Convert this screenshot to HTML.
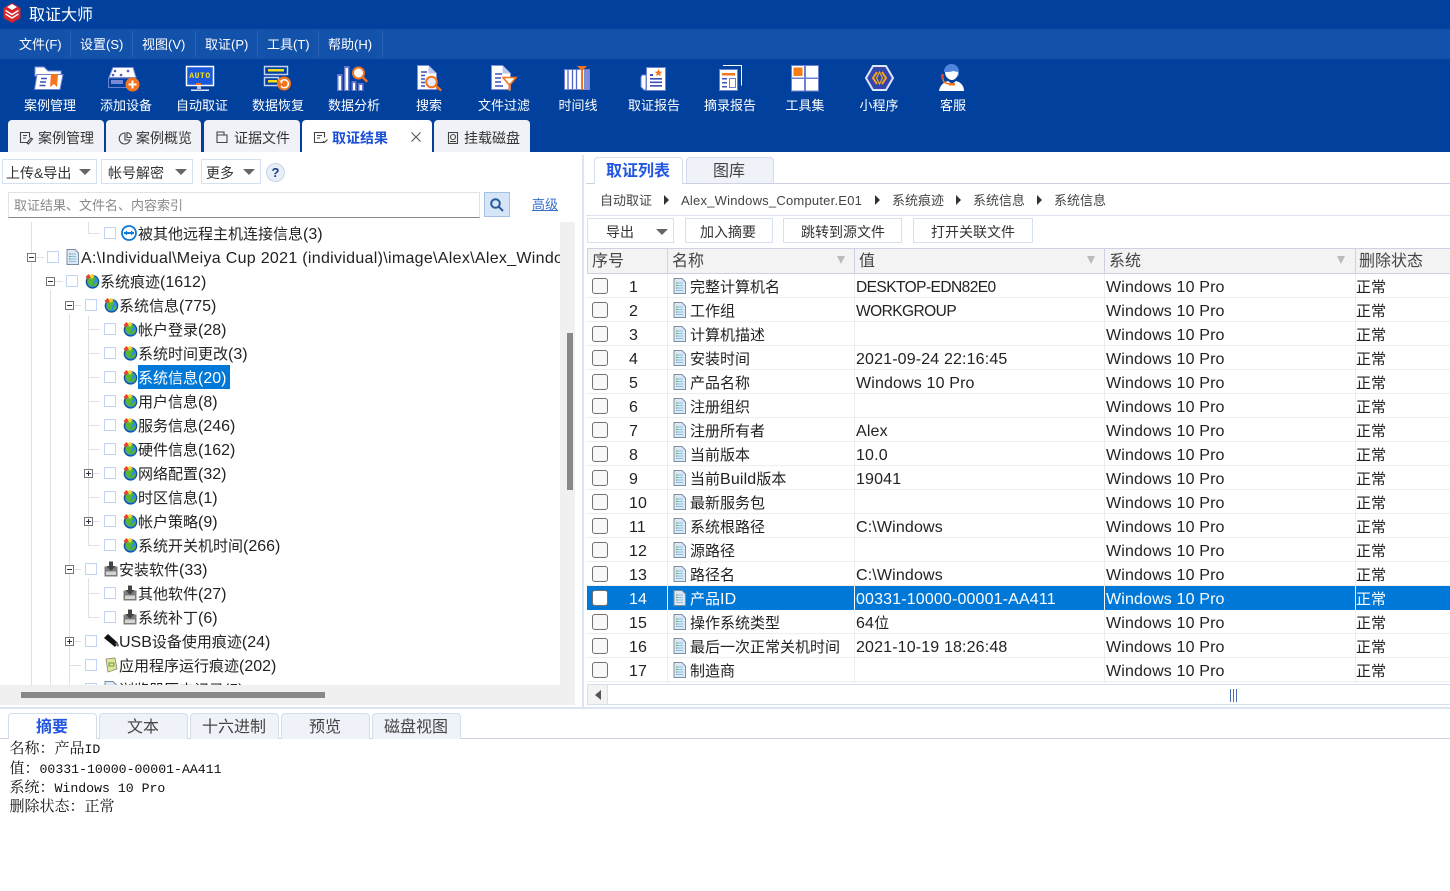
<!DOCTYPE html>
<html lang="zh"><head><meta charset="utf-8"><title>取证大师</title>
<style>
html,body{margin:0;padding:0;width:1450px;height:891px;overflow:hidden;background:#fff}
body{position:relative;font-family:"Liberation Sans","Noto Sans CJK SC",sans-serif;color:#222}
div,svg{position:absolute;box-sizing:border-box}
.t{white-space:nowrap;line-height:24px;font-size:15px;margin-top:1px}
i{font-style:normal;font-size:16px;letter-spacing:.15px}
#tree .t{margin-top:2px}
#tree i{letter-spacing:0}
#tree i.pth{letter-spacing:.3px}
.m{color:#fff;font-size:13px;top:32px}
.ms{width:1px;background:#2b64b5;top:31px;height:26px}
.l{color:#fff;font-size:13px;top:93px;text-align:center;width:80px}
.tab{top:120px;height:32px;background:#f0f2f7;border-radius:4px 4px 0 0}
.tt{top:125px;font-size:14px;color:#333}
.btn{border:1px solid #d5e0f2;background:#fff;top:218px;height:25px}
.bt{font-size:14px;color:#333;top:219px}
.cb{width:12px;height:12px;border:1.3px solid #c3d3f5;background:#fff}
.e{width:9px;height:9px;border:1px solid #777;background:#fff}
.e:before{content:"";position:absolute;left:1px;top:3px;width:5px;height:1px;background:#334}
.e.p:after{content:"";position:absolute;left:3px;top:1px;width:1px;height:5px;background:#334}
.v{width:1px;background:#e0e0e0}
.h{height:1px;background:#e0e0e0}
.i{width:16px;height:16px}
.r{left:587px;width:863px;height:24px;border-bottom:1px solid #eee}
.c{width:16px;height:16px;left:592px;border:1.5px solid #707070;border-radius:3px;background:#f8f8f8;margin-top:1px}
.d{width:13px;height:16px;left:673px}
.n,.a,.b,.s,.x{margin-top:2px}
.n{left:629px}.a{left:690px}.b{left:856px}.s{left:1106px}.x{left:1356px}
i.up{font-size:15.5px;letter-spacing:-.55px}
.hd{top:249px;font-size:16px;color:#444}
.f{left:0;top:0;width:0;height:0;border-left:4.5px solid transparent;border-right:4.5px solid transparent;border-top:8px solid #bbb}
.ar{width:0;height:0;border-left:6px solid transparent;border-right:6px solid transparent;border-top:6px solid #666;top:169px}
.bc{font-size:13px;color:#444;top:188px}
.tri{width:0;height:0;border-top:5px solid transparent;border-bottom:5px solid transparent;border-left:5px solid #333;top:195px}
.bot{top:713px;height:26px;background:#eff2f8;border:1px solid #d2ddf0;border-bottom:none;border-radius:4px 4px 0 0}
.bl{top:715px;font-size:16px;color:#444}
.mono{left:9.5px;margin-top:1px;font-family:"Liberation Mono","Noto Serif CJK SC",monospace;font-size:13.2px;line-height:19px;white-space:pre;color:#111}
.mono span{font-size:15px}
</style></head>
<body>
<svg width="0" height="0" style="left:0;top:0">
<defs>
<symbol id="g" viewBox="0 0 16 16"><circle cx="8.500" cy="8.800" r="6.800" fill="#0f4f8e"/><circle cx="8.500" cy="8.800" r="5.600" fill="#2f8fe0"/><path d="M5 5c3-2 6-1 6 1s-2 2-2 4 0 3-2 3-3-3-3-5 0-2 1-3zM11.500 9.500c2-1 2.500 0 1.500 2s-3 2-3 1 .5-2.200 1.500-3z" fill="#57b82f"/><path d="M1.500 4l3-3 2.500 2.500-3 3z" fill="#e5432b"/><path d="M5.500 2.500l3-1.500 2 2.500-3 2.500z" fill="#f6d02c"/></symbol>
<symbol id="p" viewBox="0 0 16 16"><path d="M1.500 5.500h13v10h-13z" fill="#7d7d7d"/><path d="M3 10.500h10v3.500H3z" fill="#d4d4d4"/><path d="M6 0.500h4v4.500h2.500L8 10 3.500 5H6z" fill="#444"/></symbol>
<symbol id="dc" viewBox="0 0 13 16"><path d="M1 .5h8l3.500 3.500v11.500H1z" fill="#dce9f5" stroke="#7d8da0"/><path d="M3 5h7M3 7.500h7M3 10h7M3 12.500h7" stroke="#8dbde0" stroke-width="1"/><path d="M3 5h1.500M3 7.500h1.500M3 10h1.500" stroke="#4a9a50" stroke-width="1"/></symbol>
</defs>
</svg>

<!-- top bars -->
<div style="left:0;top:0;width:1450px;height:152px;background:#01419d"></div>
<div style="left:0;top:29px;width:1450px;height:30px;background:#1352ab"></div>
<svg style="left:2px;top:2px" width="20" height="22" viewBox="0 0 20 22"><path d="M10 1l8.500 5v10L10 21l-8.500-5V6z" fill="#d8232a"/><path d="M10 2l5 3-5 3-5-3z" fill="#fff"/><path d="M3.500 8.500L10 12.500l6.500-4M3.500 12L10 16l6.500-4" stroke="#fff" stroke-width="1.500" fill="none"/></svg>
<div class="t" style="left:29px;top:3px;color:#fff;font-size:16px">取证大师</div>

<div class="t m" style="left:19px">文件(F)</div><div class="ms" style="left:70px"></div>
<div class="t m" style="left:80px">设置(S)</div><div class="ms" style="left:132px"></div>
<div class="t m" style="left:142px">视图(V)</div><div class="ms" style="left:195px"></div>
<div class="t m" style="left:205px">取证(P)</div><div class="ms" style="left:257px"></div>
<div class="t m" style="left:267px">工具(T)</div><div class="ms" style="left:318px"></div>
<div class="t m" style="left:328px">帮助(H)</div><div class="ms" style="left:382px"></div>

<!-- toolbar icons -->
<svg style="left:0;top:0" width="1000" height="100" viewBox="0 0 1000 100">
<!-- folder -->
<path d="M35 67h9l4 4h13v5H35z" fill="#fff" stroke="#7d8fd8"/><path d="M37 74.500h26L60 89.500H34.500z" fill="#fff" stroke="#6d80d0"/><path d="M41 78.500h6M40 82h6M39.500 85.500h6" stroke="#3c50b8" stroke-width="1.500"/><path d="M51 74h7l-1 13-3-3-4 3z" fill="#f5741f"/>
<!-- add device -->
<path d="M113 67.500h20l3 10h-27z" fill="#fff" stroke="#8090d8"/><circle cx="115" cy="71" r="1.300" fill="#4a5cbf"/><circle cx="128" cy="71" r="1.300" fill="#4a5cbf"/><circle cx="113" cy="75" r="1.300" fill="#4a5cbf"/><circle cx="121" cy="75" r="1.300" fill="#4a5cbf"/><path d="M108.500 78h27v9.500h-27z" fill="#01419d" stroke="#6d80d0"/><path d="M111 80h12v4h-12z" fill="#7688d8"/><circle cx="132.500" cy="84.500" r="7" fill="#f5741f"/><path d="M132.500 80.500v8M128.500 84.500h8" stroke="#fff" stroke-width="2"/>
<!-- auto -->
<path d="M186.500 66.500h27v19h-27z" fill="#1958dc" stroke="#fff" stroke-width="1.500"/><text x="200" y="78" font-family="Liberation Mono" font-size="8" font-weight="bold" letter-spacing=".6" fill="#f7e017" text-anchor="middle">AUTO</text><path d="M196 83h5v2h-5z" fill="#f5741f"/><path d="M197 86h4v3h-4z" fill="#b8c4ee"/><path d="M191 89.500h18v1.500h-18z" fill="#dfe5fa"/>
<!-- recover -->
<path d="M264.500 66.500h23v8h-23z" fill="#01419d" stroke="#c8d2f5" stroke-width="1.400"/><path d="M268 69h16v2.500h-16z" fill="#f7e017"/><path d="M264.500 77.500h14v8h-14z" fill="#01419d" stroke="#c8d2f5" stroke-width="1.400"/><path d="M268 80h9v2.500h-9z" fill="#f7e017"/><circle cx="284" cy="83.500" r="7" fill="#f5741f"/><path d="M281 81.500a4 4 0 1 1 0 4.500" stroke="#fff" stroke-width="1.500" fill="none"/><path d="M279 80.500l3.500.5-.5 3z" fill="#fff"/>
<!-- analysis -->
<path d="M337 74h5.500v17H337zM344 66h5.500v25H344zM351.500 81h5v10h-5zM358 83h5.500v8H358z" fill="#6778cc"/><path d="M338.500 76h2.500v14h-2.500zM345.500 68h2.500v22h-2.500zM353 83h2v7h-2zM359.500 85h2.500v5h-2.500z" fill="#fff"/><path d="M362.500 77l4 4" stroke="#f5741f" stroke-width="2.400" stroke-linecap="round"/><circle cx="358.500" cy="73" r="5.500" fill="#fff" stroke="#f5741f" stroke-width="2"/>
<!-- search -->
<path d="M417.500 65.500h11l8 8v16h-19z" fill="#fff" stroke="#7d8fd8"/><path d="M428.500 65.500v8h8" fill="#bcc7ee"/><path d="M421 72h6M421 75.500h4M421 79h4M421 82.500h4M421 86h4" stroke="#3c50b8" stroke-width="1.500"/><path d="M436 86l4.500 4" stroke="#f5741f" stroke-width="2.400" stroke-linecap="round"/><circle cx="431.500" cy="82" r="5.300" fill="#e8ecfb" stroke="#f5741f" stroke-width="2"/>
<!-- filter -->
<path d="M491.500 65.500h11l8 8v16h-19z" fill="#fff" stroke="#7d8fd8"/><path d="M502.500 65.500v8h8" fill="#bcc7ee"/><path d="M495 74h7M495 78h6M495 82h6M495 86h8" stroke="#3c50b8" stroke-width="1.500"/><path d="M503 77.500h13l-5.500 6.500h-2z" fill="#fff" stroke="#f5741f" stroke-width="1.600"/><path d="M508.500 84h2v7h-2z" fill="#f5741f"/>
<!-- timeline -->
<path d="M564.500 69.500h25v20h-25z" fill="#fff" stroke="#6d80d0"/><path d="M568 69v20M572.500 69v20M576.500 69v20M586 69v20" stroke="#5367c4" stroke-width="1.300"/><path d="M584 70h5.500v20H584z" fill="#7c8cd6"/><path d="M577 66h10l-5 5z" fill="#f5741f"/><path d="M581 70h2v20h-2z" fill="#f5741f"/>
<!-- report -->
<path d="M642 75h4v15h-2l-3-3V77z" fill="#fff" stroke="#6d80d0"/><path d="M646.500 67.500h19v23h-19z" fill="#fff" stroke="#6d80d0"/><path d="M650 74h3v2h-3zM650 78h12v1.600h-12zM650 81.500h12v1.600h-12zM650 85h12v1.600h-12z" fill="#3c50b8"/><path d="M658.500 69l1 2.500 2.700.2-2 1.800.6 2.600-2.300-1.400-2.300 1.400.6-2.600-2-1.800 2.700-.2z" fill="#f5741f"/>
<!-- digest -->
<path d="M723 65.500h18.500v20" fill="none" stroke="#fff"/><path d="M719.500 69.500h18v21h-18z" fill="#fff" stroke="#6d80d0"/><path d="M722 73h13v2.500h-13z" fill="#f5741f"/><path d="M722 78h5v1.500h-5zM722 82h5v1.500h-5zM722 86h5v1.500h-5z" fill="#3c50b8"/><path d="M729.500 78.500h6v9h-6z" fill="#fff" stroke="#6d80d0"/>
<!-- tools -->
<path d="M792.500 66.500h11v10.500h-11z" fill="#f57d12" stroke="#fff" stroke-width="2"/><path d="M806 66h12v11.500h-12zM792 79h12v11.500h-12zM806 79h12v11.500h-12z" fill="#fff"/><path d="M791.500 65.500h13v12.500h-13zM805.500 65.500h13v12.500h-13zM791.500 78.500h13v12.500h-13zM805.500 78.500h13v12.500h-13z" fill="none" stroke="#6d80d0"/>
<!-- mini -->
<path d="M873 66h13l7 12-7 12h-13l-7-12z" fill="#3346ab" stroke="#dfe6fb" stroke-width="2"/><path d="M877 72l-4 6 4 6M882 72l4 6-4 6" fill="none" stroke="#f3a51e" stroke-width="2"/><path d="M879.500 72l-3 6 3 6 3-6z" fill="none" stroke="#f3a51e" stroke-width="1.200"/>
<!-- service -->
<path d="M944 72a7.500 7.500 0 0 1 15-1c0 2 0 4-1 6l-6-5z" fill="#4f86dd"/><path d="M945 72c3 0 6 0 8-1l5 1c0 5-3 8-6 8s-7-3-7-8z" fill="#fff"/><path d="M939 91c1-6 5-9 9-10l4 3 4-3c4 1 8 4 8 10z" fill="#fff"/><path d="M943 75v4c0 3 3 5 7 5" fill="none" stroke="#f5741f" stroke-width="1.500"/><path d="M941 74h3v5h-3z" fill="#e23b20"/><path d="M949 83h6v2.500h-6z" fill="#f5741f"/>
</svg>

<div class="t l" style="left:10px">案例管理</div>
<div class="t l" style="left:86px">添加设备</div>
<div class="t l" style="left:162px">自动取证</div>
<div class="t l" style="left:238px">数据恢复</div>
<div class="t l" style="left:314px">数据分析</div>
<div class="t l" style="left:389px">搜索</div>
<div class="t l" style="left:464px">文件过滤</div>
<div class="t l" style="left:538px">时间线</div>
<div class="t l" style="left:614px">取证报告</div>
<div class="t l" style="left:690px">摘录报告</div>
<div class="t l" style="left:765px">工具集</div>
<div class="t l" style="left:839px">小程序</div>
<div class="t l" style="left:913px">客服</div>

<!-- tabs -->
<div class="tab" style="left:8px;width:96px"></div>
<div class="tab" style="left:106px;width:95px"></div>
<div class="tab" style="left:204px;width:96px"></div>
<div class="tab" style="left:302px;width:130px;background:#fff"></div>
<div class="tab" style="left:434px;width:96px"></div>
<svg style="left:0;top:120px" width="470" height="32" viewBox="0 120 470 32">
<g fill="none" stroke="#444" stroke-width="1.100">
<path d="M28 142.500h-7.500v-10h9v5M23 135.500h4M23 138h3M27 143l4-5 1.500 1-4 5z"/>
<path d="M125 133a5.500 5.500 0 1 0 5 7h-5z"/><path d="M127 132.500a5 5 0 0 1 4.500 5h-4.500z"/>
<path d="M217 135v-3h7v3M217 135h10v7.500h-10z"/>
<path d="M324 142.500h-9.500v-10h10v5M317 135.500h5M317 138h3M323 141l1.500 1.500 3-3"/>
<path d="M411.500 132.500l9 9M420.500 132.500l-9 9" stroke="#555"/>
<path d="M448.500 132.500h9v11h-9z"/><circle cx="453" cy="137" r="2.500"/><path d="M450 141.500h6"/>
</g></svg>
<div class="t tt" style="left:38px">案例管理</div>
<div class="t tt" style="left:136px">案例概览</div>
<div class="t tt" style="left:234px">证据文件</div>
<div class="t tt" style="left:332px;color:#1a4fd8;font-weight:bold">取证结果</div>
<div class="t tt" style="left:464px">挂载磁盘</div>

<!-- left toolbar -->
<div style="left:2px;top:159px;width:95px;height:25px;border:1px solid #d5e0f2"></div><div class="t" style="left:6px;top:160px;font-size:14px;color:#333">上传&amp;导出</div><div class="ar" style="left:79px"></div>
<div style="left:101px;top:159px;width:92px;height:25px;border:1px solid #d5e0f2"></div><div class="t" style="left:108px;top:160px;font-size:14px;color:#333">帐号解密</div><div class="ar" style="left:175px"></div>
<div style="left:201px;top:159px;width:60px;height:25px;border:1px solid #d5e0f2"></div><div class="t" style="left:206px;top:160px;font-size:14px;color:#333">更多</div><div class="ar" style="left:243px"></div>
<div style="left:266px;top:163px;width:19px;height:19px;border-radius:50%;background:#e8eef8;border:1px solid #c8d4e8;color:#1a3a80;font-size:13px;font-weight:bold;text-align:center;line-height:17px">?</div>
<div style="left:8px;top:192px;width:472px;height:26px;border:1px solid #e2e2e2;border-bottom:1px solid #888"></div>
<div class="t" style="left:14px;top:193px;font-size:13px;color:#888">取证结果、文件名、内容索引</div>
<div style="left:484px;top:192px;width:26px;height:25px;background:#d6e5f8;border:1px solid #a5c0e4"></div>
<svg style="left:489px;top:197px" width="16" height="16" viewBox="0 0 16 16"><circle cx="6.500" cy="6.500" r="4.300" fill="none" stroke="#2c5c9c" stroke-width="2"/><path d="M10 10l4 4" stroke="#2c5c9c" stroke-width="2"/></svg>
<div class="t" style="left:532px;top:192px;font-size:13px;color:#3a70cc;text-decoration:underline">高级</div>

<!-- tree -->
<div id="tree" style="left:0;top:222px;width:560px;height:463px;overflow:hidden">
<div style="left:0;top:-222px;width:700px;height:900px">
<div class="v" style="left:31px;top:222px;height:470px"></div>
<div class="v" style="left:50px;top:290px;height:400px"></div>
<div class="v" style="left:69px;top:314px;height:376px"></div>
<div class="v" style="left:88px;top:222px;height:11px"></div>
<div class="v" style="left:88px;top:316px;height:229px"></div>
<div class="v" style="left:88px;top:578px;height:39px"></div>
<div class="h" style="left:88px;top:233px;width:12px"></div>
<div class="h" style="left:36px;top:257px;width:8px"></div>
<div class="h" style="left:55px;top:281px;width:8px"></div>
<div class="h" style="left:74px;top:305px;width:7px"></div>
<div class="h" style="left:88px;top:353px;width:12px"></div>
<div class="h" style="left:88px;top:329px;width:12px"></div>
<div class="h" style="left:88px;top:377px;width:12px"></div>
<div class="h" style="left:88px;top:401px;width:12px"></div>
<div class="h" style="left:88px;top:425px;width:12px"></div>
<div class="h" style="left:88px;top:449px;width:12px"></div>
<div class="h" style="left:93px;top:473px;width:7px"></div>
<div class="h" style="left:88px;top:497px;width:12px"></div>
<div class="h" style="left:93px;top:521px;width:7px"></div>
<div class="h" style="left:88px;top:545px;width:12px"></div>
<div class="h" style="left:74px;top:569px;width:7px"></div>
<div class="h" style="left:88px;top:593px;width:12px"></div>
<div class="h" style="left:88px;top:617px;width:12px"></div>
<div class="h" style="left:74px;top:641px;width:7px"></div>
<div class="h" style="left:69px;top:665px;width:12px"></div>

<div class="cb" style="left:104px;top:227px"></div>
<svg class="i" style="left:121px;top:225px" viewBox="0 0 16 16"><circle cx="8" cy="8" r="7" fill="#fff" stroke="#0e7ad6" stroke-width="1.800"/><path d="M3 8h10" stroke="#0e7ad6" stroke-width="2"/><path d="M3 8l3-2.500v5zM13 8l-3-2.500v5z" fill="#0e7ad6"/></svg>
<div class="t" style="left:138px;top:221px">被其他远程主机连接信息<i>(3)</i></div>

<div class="e" style="left:27px;top:253px"></div><div class="cb" style="left:47px;top:251px"></div>
<svg class="d" style="left:66px;top:249px" viewBox="0 0 13 16"><use href="#dc"/></svg>
<div class="t" style="left:81px;top:245px"><i class="pth">A:\Individual\Meiya Cup 2021 (individual)\image\Alex\Alex_Windows_Computer.E01</i></div>

<div class="e" style="left:46px;top:277px"></div><div class="cb" style="left:66px;top:275px"></div>
<svg class="i" style="left:84px;top:273px"><use href="#g"/></svg>
<div class="t" style="left:100px;top:269px">系统痕迹<i>(1612)</i></div>

<div class="e" style="left:65px;top:301px"></div><div class="cb" style="left:85px;top:299px"></div>
<svg class="i" style="left:103px;top:297px"><use href="#g"/></svg>
<div class="t" style="left:119px;top:293px">系统信息<i>(775)</i></div>

<div class="cb" style="left:104px;top:323px"></div><svg class="i" style="left:122px;top:321px"><use href="#g"/></svg>
<div class="t" style="left:138px;top:317px">帐户登录<i>(28)</i></div>
<div class="cb" style="left:104px;top:347px"></div><svg class="i" style="left:122px;top:345px"><use href="#g"/></svg>
<div class="t" style="left:138px;top:341px">系统时间更改<i>(3)</i></div>
<div class="cb" style="left:104px;top:371px"></div><svg class="i" style="left:122px;top:369px"><use href="#g"/></svg>
<div style="left:138px;top:365px;width:92px;height:24px;background:#0078d7"></div>
<div class="t" style="left:138px;top:365px;color:#fff">系统信息<i>(20)</i></div>
<div class="cb" style="left:104px;top:395px"></div><svg class="i" style="left:122px;top:393px"><use href="#g"/></svg>
<div class="t" style="left:138px;top:389px">用户信息<i>(8)</i></div>
<div class="cb" style="left:104px;top:419px"></div><svg class="i" style="left:122px;top:417px"><use href="#g"/></svg>
<div class="t" style="left:138px;top:413px">服务信息<i>(246)</i></div>
<div class="cb" style="left:104px;top:443px"></div><svg class="i" style="left:122px;top:441px"><use href="#g"/></svg>
<div class="t" style="left:138px;top:437px">硬件信息<i>(162)</i></div>
<div class="e p" style="left:84px;top:469px"></div><div class="cb" style="left:104px;top:467px"></div><svg class="i" style="left:122px;top:465px"><use href="#g"/></svg>
<div class="t" style="left:138px;top:461px">网络配置<i>(32)</i></div>
<div class="cb" style="left:104px;top:491px"></div><svg class="i" style="left:122px;top:489px"><use href="#g"/></svg>
<div class="t" style="left:138px;top:485px">时区信息<i>(1)</i></div>
<div class="e p" style="left:84px;top:517px"></div><div class="cb" style="left:104px;top:515px"></div><svg class="i" style="left:122px;top:513px"><use href="#g"/></svg>
<div class="t" style="left:138px;top:509px">帐户策略<i>(9)</i></div>
<div class="cb" style="left:104px;top:539px"></div><svg class="i" style="left:122px;top:537px"><use href="#g"/></svg>
<div class="t" style="left:138px;top:533px">系统开关机时间<i>(266)</i></div>

<div class="e" style="left:65px;top:565px"></div><div class="cb" style="left:85px;top:563px"></div><svg class="i" style="left:103px;top:561px"><use href="#p"/></svg>
<div class="t" style="left:119px;top:557px">安装软件<i>(33)</i></div>
<div class="cb" style="left:104px;top:587px"></div><svg class="i" style="left:122px;top:585px"><use href="#p"/></svg>
<div class="t" style="left:138px;top:581px">其他软件<i>(27)</i></div>
<div class="cb" style="left:104px;top:611px"></div><svg class="i" style="left:122px;top:609px"><use href="#p"/></svg>
<div class="t" style="left:138px;top:605px">系统补丁<i>(6)</i></div>

<div class="e p" style="left:65px;top:637px"></div><div class="cb" style="left:85px;top:635px"></div>
<svg class="i" style="left:103px;top:633px" viewBox="0 0 16 16"><path d="M1 5l4-4 10 9-3 4z" fill="#111"/><path d="M12 11l2-2 2 3-1 2z" fill="#666"/></svg>
<div class="t" style="left:119px;top:629px"><i>USB</i>设备使用痕迹<i>(24)</i></div>

<div class="cb" style="left:85px;top:659px"></div>
<svg class="i" style="left:103px;top:657px" viewBox="0 0 16 16"><path d="M3 2l9-1 2 11-9 3z" fill="#e3e59a" stroke="#887" stroke-width=".8"/><path d="M6 6h5v3H6z" fill="none" stroke="#6a9a40"/></svg>
<div class="t" style="left:119px;top:653px">应用程序运行痕迹<i>(202)</i></div>

<div class="cb" style="left:85px;top:683px"></div>
<svg class="d" style="left:104px;top:681px" viewBox="0 0 13 16"><use href="#dc"/></svg>
<div class="t" style="left:119px;top:677px">浏览器历史记录<i>(5)</i></div>
</div></div>

<!-- left scrollbars -->
<div style="left:560px;top:222px;width:15px;height:463px;background:#f0f0f0"></div>
<div style="left:567px;top:333px;width:6px;height:157px;background:#888"></div>
<div style="left:0;top:685px;width:575px;height:20px;background:#f0f0f0"></div>
<div style="left:21px;top:692px;width:304px;height:6px;background:#888"></div>
<div style="left:582px;top:155px;width:2px;height:552px;background:#dce5f4"></div>

<!-- right tabs -->
<div style="left:594px;top:157px;width:89px;height:27px;background:#fff;border:1px solid #d2ddf0;border-bottom:none;border-radius:4px 4px 0 0;z-index:2"></div>
<div class="t" style="left:606px;top:159px;font-size:16px;font-weight:bold;color:#2255e0;z-index:3">取证列表</div>
<div style="left:686px;top:157px;width:88px;height:26px;background:#eff2f8;border:1px solid #d2ddf0;border-bottom:none;border-radius:4px 4px 0 0"></div>
<div class="t" style="left:713px;top:159px;font-size:16px;color:#444">图库</div>
<div style="left:586px;top:183px;width:864px;height:1px;background:#cdd1e3"></div>

<!-- breadcrumb -->
<div class="t bc" style="left:600px">自动取证</div><div class="tri" style="left:664px"></div>
<div class="t bc" style="left:681px;letter-spacing:.22px">Alex_Windows_Computer.E01</div><div class="tri" style="left:875px"></div>
<div class="t bc" style="left:892px">系统痕迹</div><div class="tri" style="left:956px"></div>
<div class="t bc" style="left:973px">系统信息</div><div class="tri" style="left:1037px"></div>
<div class="t bc" style="left:1054px">系统信息</div>
<div style="left:586px;top:215px;width:864px;height:1px;background:#dde3f0"></div>

<!-- buttons -->
<div class="btn" style="left:587px;width:87px"></div><div class="t bt" style="left:606px">导出</div><div class="ar" style="left:656px;top:229px"></div>
<div class="btn" style="left:685px;width:88px"></div><div class="t bt" style="left:700px">加入摘要</div>
<div class="btn" style="left:783px;width:119px"></div><div class="t bt" style="left:801px">跳转到源文件</div>
<div class="btn" style="left:913px;width:120px"></div><div class="t bt" style="left:931px">打开关联文件</div>

<!-- table header -->
<div style="left:587px;top:248px;width:863px;height:26px;background:#f3f3f3;border-top:1px solid #cdd1e3;border-bottom:1px solid #cdd1e3;border-left:1px solid #cdd1e3"></div>
<div style="left:667px;top:249px;width:1px;height:24px;background:#cdd1e3"></div>
<div style="left:854px;top:249px;width:1px;height:24px;background:#cdd1e3"></div>
<div style="left:1104px;top:249px;width:1px;height:24px;background:#cdd1e3"></div>
<div style="left:1355px;top:249px;width:1px;height:24px;background:#cdd1e3"></div>
<div class="t hd" style="left:592px">序号</div>
<div class="t hd" style="left:672px">名称</div>
<div class="t hd" style="left:859px">值</div>
<div class="t hd" style="left:1109px">系统</div>
<div class="t hd" style="left:1359px">删除状态</div>
<div class="f" style="left:837px;top:256px"></div>
<div class="f" style="left:1087px;top:256px"></div>
<div class="f" style="left:1337px;top:256px"></div>

<!-- selected row bg and lines -->
<div class="r" style="top:274px"></div><div class="r" style="top:298px"></div><div class="r" style="top:322px"></div><div class="r" style="top:346px"></div><div class="r" style="top:370px"></div><div class="r" style="top:394px"></div><div class="r" style="top:418px"></div><div class="r" style="top:442px"></div><div class="r" style="top:466px"></div><div class="r" style="top:490px"></div><div class="r" style="top:514px"></div><div class="r" style="top:538px"></div><div class="r" style="top:562px"></div>
<div class="r" style="top:610px"></div><div class="r" style="top:634px"></div><div class="r" style="top:658px"></div>
<div style="left:667px;top:274px;width:1px;height:409px;background:#eee"></div>
<div style="left:854px;top:274px;width:1px;height:409px;background:#eee"></div>
<div style="left:1104px;top:274px;width:1px;height:409px;background:#eee"></div>
<div style="left:1355px;top:274px;width:1px;height:409px;background:#eee"></div>
<div class="r" style="top:586px;background:#0078d7;border:none"></div>
<div style="left:667px;top:586px;width:1px;height:24px;background:#fff"></div>
<div style="left:854px;top:586px;width:1px;height:24px;background:#fff"></div>
<div style="left:1104px;top:586px;width:1px;height:24px;background:#fff"></div>
<div style="left:1355px;top:586px;width:1px;height:24px;background:#fff"></div>

<!-- rows -->
<div class="c" style="top:277px"></div><div class="t n" style="top:274px"><i>1</i></div><svg class="d" style="top:278px" viewBox="0 0 13 16"><use href="#dc"/></svg><div class="t a" style="top:274px">完整计算机名</div><div class="t b" style="top:274px"><i class="up">DESKTOP-EDN82E0</i></div><div class="t s" style="top:274px"><i>Windows 10 Pro</i></div><div class="t x" style="top:274px">正常</div>
<div class="c" style="top:301px"></div><div class="t n" style="top:298px"><i>2</i></div><svg class="d" style="top:302px" viewBox="0 0 13 16"><use href="#dc"/></svg><div class="t a" style="top:298px">工作组</div><div class="t b" style="top:298px"><i class="up">WORKGROUP</i></div><div class="t s" style="top:298px"><i>Windows 10 Pro</i></div><div class="t x" style="top:298px">正常</div>
<div class="c" style="top:325px"></div><div class="t n" style="top:322px"><i>3</i></div><svg class="d" style="top:326px" viewBox="0 0 13 16"><use href="#dc"/></svg><div class="t a" style="top:322px">计算机描述</div><div class="t s" style="top:322px"><i>Windows 10 Pro</i></div><div class="t x" style="top:322px">正常</div>
<div class="c" style="top:349px"></div><div class="t n" style="top:346px"><i>4</i></div><svg class="d" style="top:350px" viewBox="0 0 13 16"><use href="#dc"/></svg><div class="t a" style="top:346px">安装时间</div><div class="t b" style="top:346px"><i>2021-09-24 22:16:45</i></div><div class="t s" style="top:346px"><i>Windows 10 Pro</i></div><div class="t x" style="top:346px">正常</div>
<div class="c" style="top:373px"></div><div class="t n" style="top:370px"><i>5</i></div><svg class="d" style="top:374px" viewBox="0 0 13 16"><use href="#dc"/></svg><div class="t a" style="top:370px">产品名称</div><div class="t b" style="top:370px"><i>Windows 10 Pro</i></div><div class="t s" style="top:370px"><i>Windows 10 Pro</i></div><div class="t x" style="top:370px">正常</div>
<div class="c" style="top:397px"></div><div class="t n" style="top:394px"><i>6</i></div><svg class="d" style="top:398px" viewBox="0 0 13 16"><use href="#dc"/></svg><div class="t a" style="top:394px">注册组织</div><div class="t s" style="top:394px"><i>Windows 10 Pro</i></div><div class="t x" style="top:394px">正常</div>
<div class="c" style="top:421px"></div><div class="t n" style="top:418px"><i>7</i></div><svg class="d" style="top:422px" viewBox="0 0 13 16"><use href="#dc"/></svg><div class="t a" style="top:418px">注册所有者</div><div class="t b" style="top:418px"><i>Alex</i></div><div class="t s" style="top:418px"><i>Windows 10 Pro</i></div><div class="t x" style="top:418px">正常</div>
<div class="c" style="top:445px"></div><div class="t n" style="top:442px"><i>8</i></div><svg class="d" style="top:446px" viewBox="0 0 13 16"><use href="#dc"/></svg><div class="t a" style="top:442px">当前版本</div><div class="t b" style="top:442px"><i>10.0</i></div><div class="t s" style="top:442px"><i>Windows 10 Pro</i></div><div class="t x" style="top:442px">正常</div>
<div class="c" style="top:469px"></div><div class="t n" style="top:466px"><i>9</i></div><svg class="d" style="top:470px" viewBox="0 0 13 16"><use href="#dc"/></svg><div class="t a" style="top:466px">当前<i>Build</i>版本</div><div class="t b" style="top:466px"><i>19041</i></div><div class="t s" style="top:466px"><i>Windows 10 Pro</i></div><div class="t x" style="top:466px">正常</div>
<div class="c" style="top:493px"></div><div class="t n" style="top:490px"><i>10</i></div><svg class="d" style="top:494px" viewBox="0 0 13 16"><use href="#dc"/></svg><div class="t a" style="top:490px">最新服务包</div><div class="t s" style="top:490px"><i>Windows 10 Pro</i></div><div class="t x" style="top:490px">正常</div>
<div class="c" style="top:517px"></div><div class="t n" style="top:514px"><i>11</i></div><svg class="d" style="top:518px" viewBox="0 0 13 16"><use href="#dc"/></svg><div class="t a" style="top:514px">系统根路径</div><div class="t b" style="top:514px"><i>C:\Windows</i></div><div class="t s" style="top:514px"><i>Windows 10 Pro</i></div><div class="t x" style="top:514px">正常</div>
<div class="c" style="top:541px"></div><div class="t n" style="top:538px"><i>12</i></div><svg class="d" style="top:542px" viewBox="0 0 13 16"><use href="#dc"/></svg><div class="t a" style="top:538px">源路径</div><div class="t s" style="top:538px"><i>Windows 10 Pro</i></div><div class="t x" style="top:538px">正常</div>
<div class="c" style="top:565px"></div><div class="t n" style="top:562px"><i>13</i></div><svg class="d" style="top:566px" viewBox="0 0 13 16"><use href="#dc"/></svg><div class="t a" style="top:562px">路径名</div><div class="t b" style="top:562px"><i>C:\Windows</i></div><div class="t s" style="top:562px"><i>Windows 10 Pro</i></div><div class="t x" style="top:562px">正常</div>
<div class="c" style="top:589px;background:#fff"></div><div class="t n" style="top:586px;color:#fff"><i>14</i></div><svg class="d" style="top:590px" viewBox="0 0 13 16"><use href="#dc"/></svg><div class="t a" style="top:586px;color:#fff">产品<i>ID</i></div><div class="t b" style="top:586px;color:#fff"><i>00331-10000-00001-AA411</i></div><div class="t s" style="top:586px;color:#fff"><i>Windows 10 Pro</i></div><div class="t x" style="top:586px;color:#fff">正常</div>
<div class="c" style="top:613px"></div><div class="t n" style="top:610px"><i>15</i></div><svg class="d" style="top:614px" viewBox="0 0 13 16"><use href="#dc"/></svg><div class="t a" style="top:610px">操作系统类型</div><div class="t b" style="top:610px"><i>64</i>位</div><div class="t s" style="top:610px"><i>Windows 10 Pro</i></div><div class="t x" style="top:610px">正常</div>
<div class="c" style="top:637px"></div><div class="t n" style="top:634px"><i>16</i></div><svg class="d" style="top:638px" viewBox="0 0 13 16"><use href="#dc"/></svg><div class="t a" style="top:634px">最后一次正常关机时间</div><div class="t b" style="top:634px"><i>2021-10-19 18:26:48</i></div><div class="t s" style="top:634px"><i>Windows 10 Pro</i></div><div class="t x" style="top:634px">正常</div>
<div class="c" style="top:661px"></div><div class="t n" style="top:658px"><i>17</i></div><svg class="d" style="top:662px" viewBox="0 0 13 16"><use href="#dc"/></svg><div class="t a" style="top:658px">制造商</div><div class="t s" style="top:658px"><i>Windows 10 Pro</i></div><div class="t x" style="top:658px">正常</div>

<!-- table h scrollbar -->
<div style="left:587px;top:684px;width:863px;height:21px;background:#fff;border:1px solid #d5dfef;border-right:none"></div>
<div style="left:588px;top:685px;width:20px;height:19px;background:#f3f3f3;border-right:1px solid #d5dfef"></div>
<div style="left:595px;top:690px;width:0;height:0;border-top:5px solid transparent;border-bottom:5px solid transparent;border-right:6px solid #555"></div>
<div style="left:1230px;top:689px;width:7px;height:13px;border-left:1px solid #4a6fb0;border-right:1px solid #4a6fb0"></div>
<div style="left:1233px;top:689px;width:1px;height:13px;background:#4a6fb0"></div>

<!-- bottom -->
<div style="left:0;top:707px;width:1450px;height:2px;background:#dbe4f3"></div>
<div style="left:0;top:738px;width:1450px;height:1px;background:#cdd1e3"></div>
<div class="bot" style="left:8px;width:89px;height:26px;background:#fff;z-index:2"></div>
<div class="bot" style="left:99px;width:89px"></div>
<div class="bot" style="left:190px;width:89px"></div>
<div class="bot" style="left:281px;width:89px"></div>
<div class="bot" style="left:372px;width:89px"></div>
<div class="t bl" style="left:36px;color:#2255e0;font-weight:bold;z-index:3">摘要</div>
<div class="t bl" style="left:127px">文本</div>
<div class="t bl" style="left:202px">十六进制</div>
<div class="t bl" style="left:309px">预览</div>
<div class="t bl" style="left:384px">磁盘视图</div>
<div class="mono" style="top:739px"><span>名称：产品</span>ID</div>
<div class="mono" style="top:759px"><span>值：</span>00331-10000-00001-AA411</div>
<div class="mono" style="top:778px"><span>系统：</span>Windows 10 Pro</div>
<div class="mono" style="top:797px"><span>删除状态：正常</span></div>
</body></html>
